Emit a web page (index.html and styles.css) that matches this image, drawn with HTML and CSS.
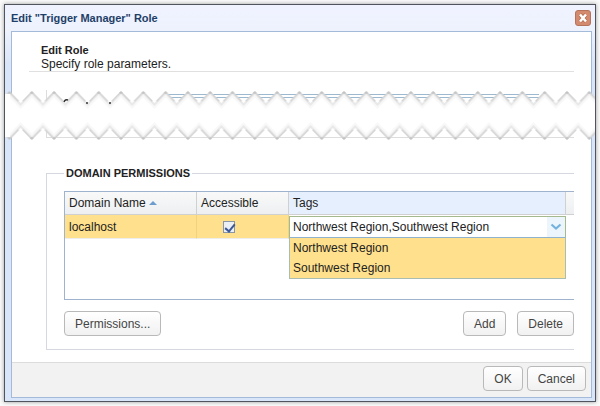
FILE: index.html
```html
<!DOCTYPE html>
<html lang="en">
<head>
    <meta charset="UTF-8">
    <meta name="viewport" content="width=device-width, initial-scale=1.0">
    <title>Edit Role</title>
    <link rel="stylesheet" href="styles.css">
</head>
<body>

    <div class="dialog" role="dialog" aria-labelledby="dialog-title">

        <!-- Title bar -->
        <header class="title-bar">
            <h1 id="dialog-title">Edit "Trigger Manager" Role</h1>
            <button type="button" class="close-btn" aria-label="Close">
                <svg width="16" height="16" viewBox="0 0 16 16">
                    <path d="M5 4.5L11 11.5M11 4.5L5 11.5" stroke="#b06a50" stroke-width="4"/>
                    <path d="M5 4.5L11 11.5M11 4.5L5 11.5" stroke="#fff" stroke-width="2.6"/>
                </svg>
            </button>
        </header>

        <form class="panel">
            <div class="content">
                <div class="intro">
                    <h2>Edit Role</h2>
                    <p>Specify role parameters.</p>
                </div>

                <!-- Collapsed part of the form -->
                <div class="cut-section">
                    <div class="cut-field"></div>
                </div>

                <!-- Domain permissions -->
                <fieldset class="group">
                    <legend>DOMAIN PERMISSIONS</legend>
                    <div class="grid">
                        <table>
                            <colgroup>
                                <col class="col-name">
                                <col class="col-access">
                                <col>
                                <col class="col-end">
                            </colgroup>
                            <thead>
                                <tr>
                                    <th>Domain Name <span class="sort-asc"></span></th>
                                    <th>Accessible</th>
                                    <th class="active" id="tags-head">Tags</th>
                                    <th></th>
                                </tr>
                            </thead>
                            <tbody>
                                <tr>
                                    <td class="selected">localhost</td>
                                    <td class="selected center"><input type="checkbox" aria-label="Accessible" checked></td>
                                    <td class="editor">
                                        <div class="combo">
                                            <input type="text" aria-labelledby="tags-head" value="Northwest Region,Southwest Region">
                                            <button type="button" aria-label="Show tags">
                                                <svg width="12" height="8" viewBox="0 0 12 8">
                                                    <path d="M1.5 1.5L6 5.5L10.5 1.5" fill="none" stroke="#74b3de" stroke-width="2.2"/>
                                                </svg>
                                            </button>
                                            <ul class="combo-list">
                                                <li>Northwest Region</li>
                                                <li>Southwest Region</li>
                                            </ul>
                                        </div>
                                    </td>
                                    <td></td>
                                </tr>
                            </tbody>
                        </table>
                    </div>
                    <div class="group-buttons">
                        <button type="button" class="btn push">Permissions...</button>
                        <button type="button" class="btn">Add</button>
                        <button type="button" class="btn">Delete</button>
                    </div>
                </fieldset>
            </div>

            <footer class="footer">
                <button type="submit" class="btn">OK</button>
                <button type="button" class="btn">Cancel</button>
            </footer>
        </form>

        <!-- Torn strip over the middle of the dialog -->
        <svg class="tear" aria-hidden="true">
            <defs>
                <pattern id="teeth" x="4.5" width="22.3" height="56" patternUnits="userSpaceOnUse">
                    <path d="M0 5L11.15 16.5L22.3 5V52L11.15 40.5L0 52Z" fill="#fff"/>
                    <path d="M0 8L11.15 19.5L22.3 8M0 49L11.15 37.5L22.3 49" fill="none" stroke="#f8f8f8" stroke-width="3"/>
                    <path d="M0 6L11.15 17.5L22.3 6M0 51L11.15 39.5L22.3 51" fill="none" stroke="#e9e9e9" stroke-width="2"/>
                    <path d="M5 -0.2M0 5L9 14.3M22.3 5L13.3 14.3M0 52L9 42.7M22.3 52L13.3 42.7" fill="none" stroke="#d3d3d3" stroke-width="1.4"/>
                    <path d="M0 4V7L2 6M22.3 4V7L20.3 6M0 53V50L2 51M22.3 53V50L20.3 51" fill="#c4c4c4"/>
                </pattern>
            </defs>
            <rect width="100%" height="56" fill="url(#teeth)"/>
            <rect y="7" width="5" height="43" fill="#fff"/>
            <path d="M59 15q1-3 4-2M81 16h2M104 16h2" fill="none" stroke="#333" stroke-width="1.4"/>
        </svg>
    </div>

</body>
</html>
```
FILE: styles.css
```css
* {
    margin: 0;
    padding: 0;
    box-sizing: border-box;
}

body {
    padding: 4px;
    min-height: 100vh;
    display: flex;
    background: #fafafa;
    font-family: "Liberation Sans", Arial, sans-serif;
    font-size: 12px;
    line-height: 14px;
    color: #222;
}

button,
input {
    font: inherit;
    color: inherit;
}

/* Dialog window */
.dialog {
    position: relative;
    flex: 1;
    display: flex;
    flex-direction: column;
    padding: 0 3px 3px 6px;
    border: 1px solid #50545c;
    background: linear-gradient(#f0f3ff, #edf2fd 26px, #d9e5f8 60px);
    box-shadow: 0 0 4px #999;
}

.title-bar {
    display: flex;
    align-items: center;
    justify-content: space-between;
    height: 26px;
    padding-right: 1px;
}

.title-bar h1 {
    font-size: 11px;
    color: #1f3f68;
}

.close-btn {
    width: 16px;
    height: 16px;
    border: 1px solid #b5735c;
    border-radius: 3px;
    background: #d48a6e;
    display: flex;
    align-items: center;
    justify-content: center;
}

.close-btn svg {
    flex: none;
}

.panel {
    flex: 1;
    display: flex;
    flex-direction: column;
    border: 1px solid #a3bbd8;
    background: #fff;
}

.content {
    flex: 1;
    padding: 11px 17px 10px;
}

.intro {
    padding: 0 0 0 12px;
    height: 29px;
    border-bottom: 1px solid #e0e0e0;
}

.intro h2 {
    font-size: 11px;
}

/* Part of the form hidden under the tear */
.cut-section {
    height: 48px;
    margin: 18px 0 0 17px;
    padding: 4px 35px 0 121px;
    border-left: 1px solid #ddd;
    border-bottom: 1px solid #ddd;
}

.cut-field {
    height: 4px;
    border-top: 1px solid #9db9cf;
    border-bottom: 1px solid #9db9cf;
}

/* Domain permissions group */
.group {
    margin: 28px 0 0 17px;
    padding: 11px 0 13px 17px;
    border: 1px solid #d5d8de;
    border-right: 0;
}

.group legend {
    padding: 0 2px;
    font-size: 11px;
    font-weight: bold;
}

.grid {
    height: 109px;
    border: 1px solid #9fb3cf;
    border-right: 0;
}

table {
    width: 100%;
    table-layout: fixed;
    border-collapse: separate;
    border-spacing: 0;
}

.col-name {
    width: 132px;
}

.col-access {
    width: 92px;
}

.col-end {
    width: 8px;
}

th {
    height: 23px;
    padding: 0 4px;
    font-weight: normal;
    text-align: left;
    border-right: 1px solid #d0d0d0;
    border-bottom: 1px solid #d0d0d0;
    background: linear-gradient(#f9f9f9, #eeeff1);
}

th:last-child {
    padding: 0;
    border-right: 0;
}

th.active {
    background: #e6effd;
}

.sort-asc {
    display: inline-block;
    border: 4px solid transparent;
    border-top: 0;
    border-bottom: 4px solid #6c9dcc;
    vertical-align: 2px;
}

td {
    height: 24px;
    padding: 0 4px;
}

td.selected {
    background: #ffe08c;
    border-right: 1px solid #f1d27e;
    border-bottom: 1px solid #ededed;
}

td.center {
    text-align: center;
    padding: 0 28px 0 0;
}

td input[type="checkbox"] {
    appearance: none;
    position: relative;
    width: 12px;
    height: 12px;
    border: 1px solid #8796a8;
    background: #eaf0f6;
    vertical-align: middle;
}

td input[type="checkbox"]:checked::after {
    content: "";
    position: absolute;
    left: 3px;
    top: 0;
    width: 4px;
    height: 8px;
    border: solid #3d5896;
    border-width: 0 2px 2px 0;
    transform: rotate(40deg);
}

/* Tags drop-down */
td.editor {
    padding: 0;
}

.combo {
    position: relative;
    display: flex;
    height: 22px;
    border: 1px solid #a5b98f;
    border-bottom-color: #8fb2cf;
    background: #fff;
}

.combo input {
    flex: 1;
    min-width: 0;
    padding-left: 3px;
    border: 0;
    outline: 0;
    background: none;
}

.combo button {
    width: 18px;
    border: 0;
    background: #edf5fc;
}

.combo-list {
    position: absolute;
    top: 20px;
    left: -1px;
    right: -1px;
    border: 1px solid #a9bdb0;
    border-top-color: #8fb2cf;
    background: #ffe08c;
    list-style: none;
}

.combo-list li {
    padding: 3px;
}

/* Buttons */
.btn {
    height: 25px;
    padding: 0 10px;
    border: 1px solid #b9b9b9;
    border-radius: 4px;
    background: linear-gradient(#fff, #f1f1f1);
    color: #444;
}

.group-buttons {
    display: flex;
    gap: 11px;
    margin-top: 11px;
}

.group-buttons .push {
    margin-right: auto;
}

.footer {
    display: flex;
    justify-content: flex-end;
    gap: 4px;
    padding: 3px 5px 6px;
    border-top: 1px solid #dcdcdc;
    background: #f2f2f2;
}

/* Torn strip */
.tear {
    position: absolute;
    top: 82px;
    left: 0;
    width: 100%;
    height: 56px;
}
```
